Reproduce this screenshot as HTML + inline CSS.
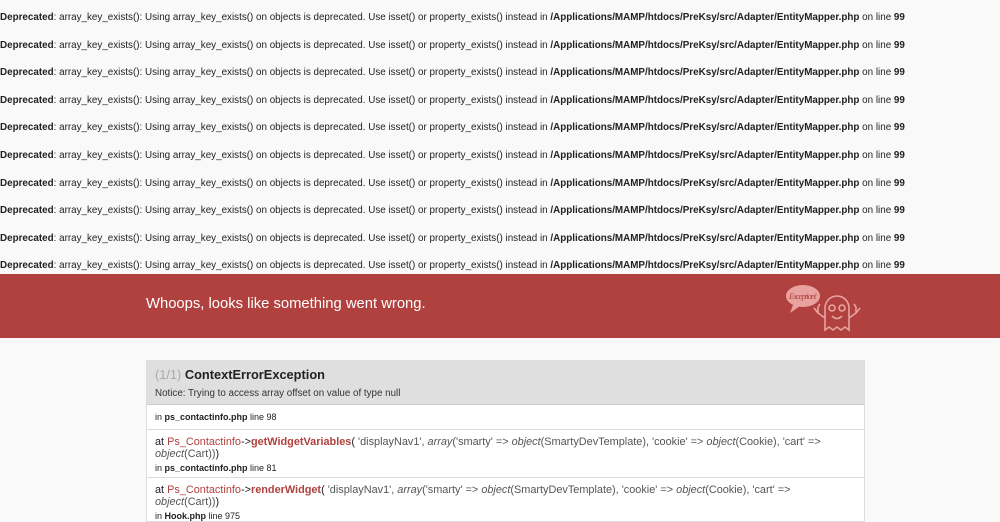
<!DOCTYPE html>
<html><head><meta charset="utf-8"><style>
body{margin:0;background:#f9f9f9;font-family:"Liberation Sans",Arial,sans-serif;color:#222;width:1000px;height:513px;overflow:hidden;position:relative}
.d{position:absolute;left:0;font-size:9.85px;white-space:nowrap;color:#222}
.d b{font-weight:bold}
.ban{position:absolute;left:0;top:274px;width:1000px;height:64px;background:#b0413e}
.ban h1{position:absolute;left:146px;top:22px;margin:0;font-weight:normal;font-size:14.8px;color:#fff}
.box{position:absolute;left:146px;top:360px;width:717px;height:160px;background:#fff;border:1px solid #ddd}
.hd{background:#dfdfdf;height:43px;border-bottom:1px solid #ccc;position:relative}
.hd .t{position:absolute;left:8px;top:6px;font-size:12.8px;font-weight:bold;color:#222}
.hd .t span{color:#aaa;font-weight:normal}
.hd .m{position:absolute;left:8px;top:27px;font-size:9.8px;color:#333}
.r{border-bottom:1px solid #ddd;padding:0 8px;font-size:9px;color:#222}
.at{font-size:10.9px;line-height:12px;color:#222}
.c{color:#b0413e}.f{color:#b0413e;font-weight:bold}.g{color:#555}
i{color:#555}
</style></head><body>
<div class="d" style="top:12px"><b>Deprecated</b>: array_key_exists(): Using array_key_exists() on objects is deprecated. Use isset() or property_exists() instead in <b>/Applications/MAMP/htdocs/PreKsy/src/Adapter/EntityMapper.php</b> on line <b>99</b></div>
<div class="d" style="top:40px"><b>Deprecated</b>: array_key_exists(): Using array_key_exists() on objects is deprecated. Use isset() or property_exists() instead in <b>/Applications/MAMP/htdocs/PreKsy/src/Adapter/EntityMapper.php</b> on line <b>99</b></div>
<div class="d" style="top:67px"><b>Deprecated</b>: array_key_exists(): Using array_key_exists() on objects is deprecated. Use isset() or property_exists() instead in <b>/Applications/MAMP/htdocs/PreKsy/src/Adapter/EntityMapper.php</b> on line <b>99</b></div>
<div class="d" style="top:95px"><b>Deprecated</b>: array_key_exists(): Using array_key_exists() on objects is deprecated. Use isset() or property_exists() instead in <b>/Applications/MAMP/htdocs/PreKsy/src/Adapter/EntityMapper.php</b> on line <b>99</b></div>
<div class="d" style="top:122px"><b>Deprecated</b>: array_key_exists(): Using array_key_exists() on objects is deprecated. Use isset() or property_exists() instead in <b>/Applications/MAMP/htdocs/PreKsy/src/Adapter/EntityMapper.php</b> on line <b>99</b></div>
<div class="d" style="top:150px"><b>Deprecated</b>: array_key_exists(): Using array_key_exists() on objects is deprecated. Use isset() or property_exists() instead in <b>/Applications/MAMP/htdocs/PreKsy/src/Adapter/EntityMapper.php</b> on line <b>99</b></div>
<div class="d" style="top:178px"><b>Deprecated</b>: array_key_exists(): Using array_key_exists() on objects is deprecated. Use isset() or property_exists() instead in <b>/Applications/MAMP/htdocs/PreKsy/src/Adapter/EntityMapper.php</b> on line <b>99</b></div>
<div class="d" style="top:205px"><b>Deprecated</b>: array_key_exists(): Using array_key_exists() on objects is deprecated. Use isset() or property_exists() instead in <b>/Applications/MAMP/htdocs/PreKsy/src/Adapter/EntityMapper.php</b> on line <b>99</b></div>
<div class="d" style="top:233px"><b>Deprecated</b>: array_key_exists(): Using array_key_exists() on objects is deprecated. Use isset() or property_exists() instead in <b>/Applications/MAMP/htdocs/PreKsy/src/Adapter/EntityMapper.php</b> on line <b>99</b></div>
<div class="d" style="top:260px"><b>Deprecated</b>: array_key_exists(): Using array_key_exists() on objects is deprecated. Use isset() or property_exists() instead in <b>/Applications/MAMP/htdocs/PreKsy/src/Adapter/EntityMapper.php</b> on line <b>99</b></div>
<div class="ban"><h1>Whoops, looks like something went wrong.</h1>
<svg style="position:absolute;left:785px;top:6px" width="82" height="54" viewBox="0 0 82 54" fill="none" stroke="#e8a3a1" stroke-width="1.6">
<ellipse cx="18" cy="16" rx="17" ry="11" fill="#e8a3a1" stroke="none"/>
<path d="M8 25 L5 33 L15 26 z" fill="#e8a3a1" stroke="none"/>
<text x="4" y="19" font-size="8.5" font-style="italic" fill="#b0413e" stroke="none" font-family="Liberation Serif,serif" textLength="28">Exception!</text>
<path d="M40 50 V28 a12 12 0 0 1 24 0 V50 l-4 -3 -4 3 -4 -3 -4 3 -4 -3 z"/>
<circle cx="47" cy="28" r="3"/><circle cx="57" cy="28" r="3"/>
<path d="M47 36 q5 5 10 0"/>
<path d="M40 38 l-7 -5 v-6 M33 33 l-4 -5 M33 27 l2 -3"/><path d="M64 38 l7 -5 v-6 M71 33 l4 -5 M71 27 l-2 -3"/>
</svg></div>
<div class="box">
<div class="hd"><div class="t"><span>(1/1)</span> ContextErrorException</div><div class="m">Notice: Trying to access array offset on value of type null</div></div>
<div class="r" style="height:24px;line-height:24px">in <b>ps_contactinfo.php</b> line 98</div>
<div class="r" style="padding-top:6px;padding-bottom:4px"><div class="at">at <span class="c">Ps_Contactinfo</span>-&gt;<span class="f">getWidgetVariables</span>(<span class="g"> 'displayNav1', <i>array</i>('smarty' =&gt; <i>object</i>(SmartyDevTemplate), 'cookie' =&gt; <i>object</i>(Cookie), 'cart' =&gt; <i>object</i>(Cart))</span>)</div><div style="margin-top:3px">in <b>ps_contactinfo.php</b> line 81</div></div>
<div class="r" style="padding-top:6px;border:none"><div class="at">at <span class="c">Ps_Contactinfo</span>-&gt;<span class="f">renderWidget</span>(<span class="g"> 'displayNav1', <i>array</i>('smarty' =&gt; <i>object</i>(SmartyDevTemplate), 'cookie' =&gt; <i>object</i>(Cookie), 'cart' =&gt; <i>object</i>(Cart))</span>)</div><div style="margin-top:3px">in <b>Hook.php</b> line 975</div></div>
</div>
</body></html>
